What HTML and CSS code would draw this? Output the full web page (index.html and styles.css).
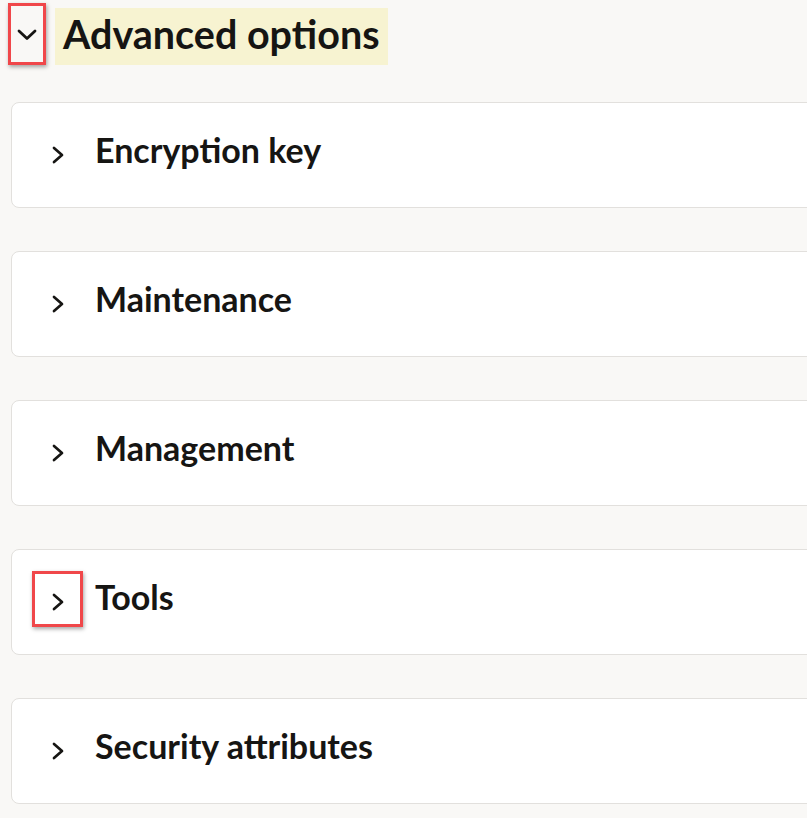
FILE: index.html
```html
<!DOCTYPE html>
<html>
<head>
<meta charset="utf-8">
<link rel="stylesheet" href="styles.css">
</head>
<body>
<div class="header">
  <div class="toggle callout">
    <svg width="20" height="12" viewBox="0 0 20 12"><path d="M2 2 L10 9.5 L18 2" fill="none" stroke="#161513" stroke-width="2.8" stroke-linecap="round" stroke-linejoin="round"/></svg>
  </div>
  <h1 class="title">Advanced options</h1>
</div>
<div class="list">
  <div class="card"><span class="chev"><svg width="12" height="18" viewBox="0 0 12 18"><path d="M2 2 L10 9 L2 16" fill="none" stroke="#161513" stroke-width="2.7" stroke-linecap="round" stroke-linejoin="round"/></svg></span><span class="label">Encryption key</span></div>
  <div class="card"><span class="chev"><svg width="12" height="18" viewBox="0 0 12 18"><path d="M2 2 L10 9 L2 16" fill="none" stroke="#161513" stroke-width="2.7" stroke-linecap="round" stroke-linejoin="round"/></svg></span><span class="label">Maintenance</span></div>
  <div class="card"><span class="chev"><svg width="12" height="18" viewBox="0 0 12 18"><path d="M2 2 L10 9 L2 16" fill="none" stroke="#161513" stroke-width="2.7" stroke-linecap="round" stroke-linejoin="round"/></svg></span><span class="label">Management</span></div>
  <div class="card"><span class="chev callout"><svg width="12" height="18" viewBox="0 0 12 18"><path d="M2 2 L10 9 L2 16" fill="none" stroke="#161513" stroke-width="2.7" stroke-linecap="round" stroke-linejoin="round"/></svg></span><span class="label">Tools</span></div>
  <div class="card"><span class="chev"><svg width="12" height="18" viewBox="0 0 12 18"><path d="M2 2 L10 9 L2 16" fill="none" stroke="#161513" stroke-width="2.7" stroke-linecap="round" stroke-linejoin="round"/></svg></span><span class="label">Security attributes</span></div>
</div>
</body>
</html>
```
FILE: styles.css
```css
html, body {
  margin: 0;
  padding: 0;
  background: #f9f8f6;
  font-family: Lato, "Noto Sans", sans-serif;
  color: #161513;
  overflow: hidden;
}
.header {
  display: flex;
  align-items: flex-start;
  padding: 3px 0 0 8px;
  height: 102px;
  box-sizing: border-box;
}
.toggle {
  width: 38px;
  height: 62px;
  box-sizing: border-box;
  display: flex;
  align-items: center;
  justify-content: center;
  padding-top: 1px;
}
.callout {
  border: 3px solid #f0474a;
  box-shadow: 1px 2px 4px rgba(0,0,0,0.35);
}
.title {
  margin: 5px 0 0 9px;
  background: #f7f3d1;
  font-size: 39.5px;
  font-weight: 700;
  height: 57px;
  line-height: 52px;
  padding: 0 8px 0 8px;
  box-sizing: border-box;
}
.list {
  display: flex;
  flex-direction: column;
  gap: 43px;
  padding-left: 11px;
}
.card {
  width: 830px;
  height: 106px;
  box-sizing: border-box;
  background: #fff;
  border: 1px solid #e2e0dd;
  border-radius: 8px;
  display: flex;
  align-items: center;
  padding-left: 20px;
}
.chev {
  width: 51px;
  height: 56px;
  margin-top: -6px;
  padding-top: 6px;
  box-sizing: border-box;
  display: flex;
  align-items: center;
  justify-content: center;
  flex-shrink: 0;
}
.label {
  font-size: 34px;
  font-weight: 700;
  margin-left: 12px;
  margin-top: -11px;
}
```
